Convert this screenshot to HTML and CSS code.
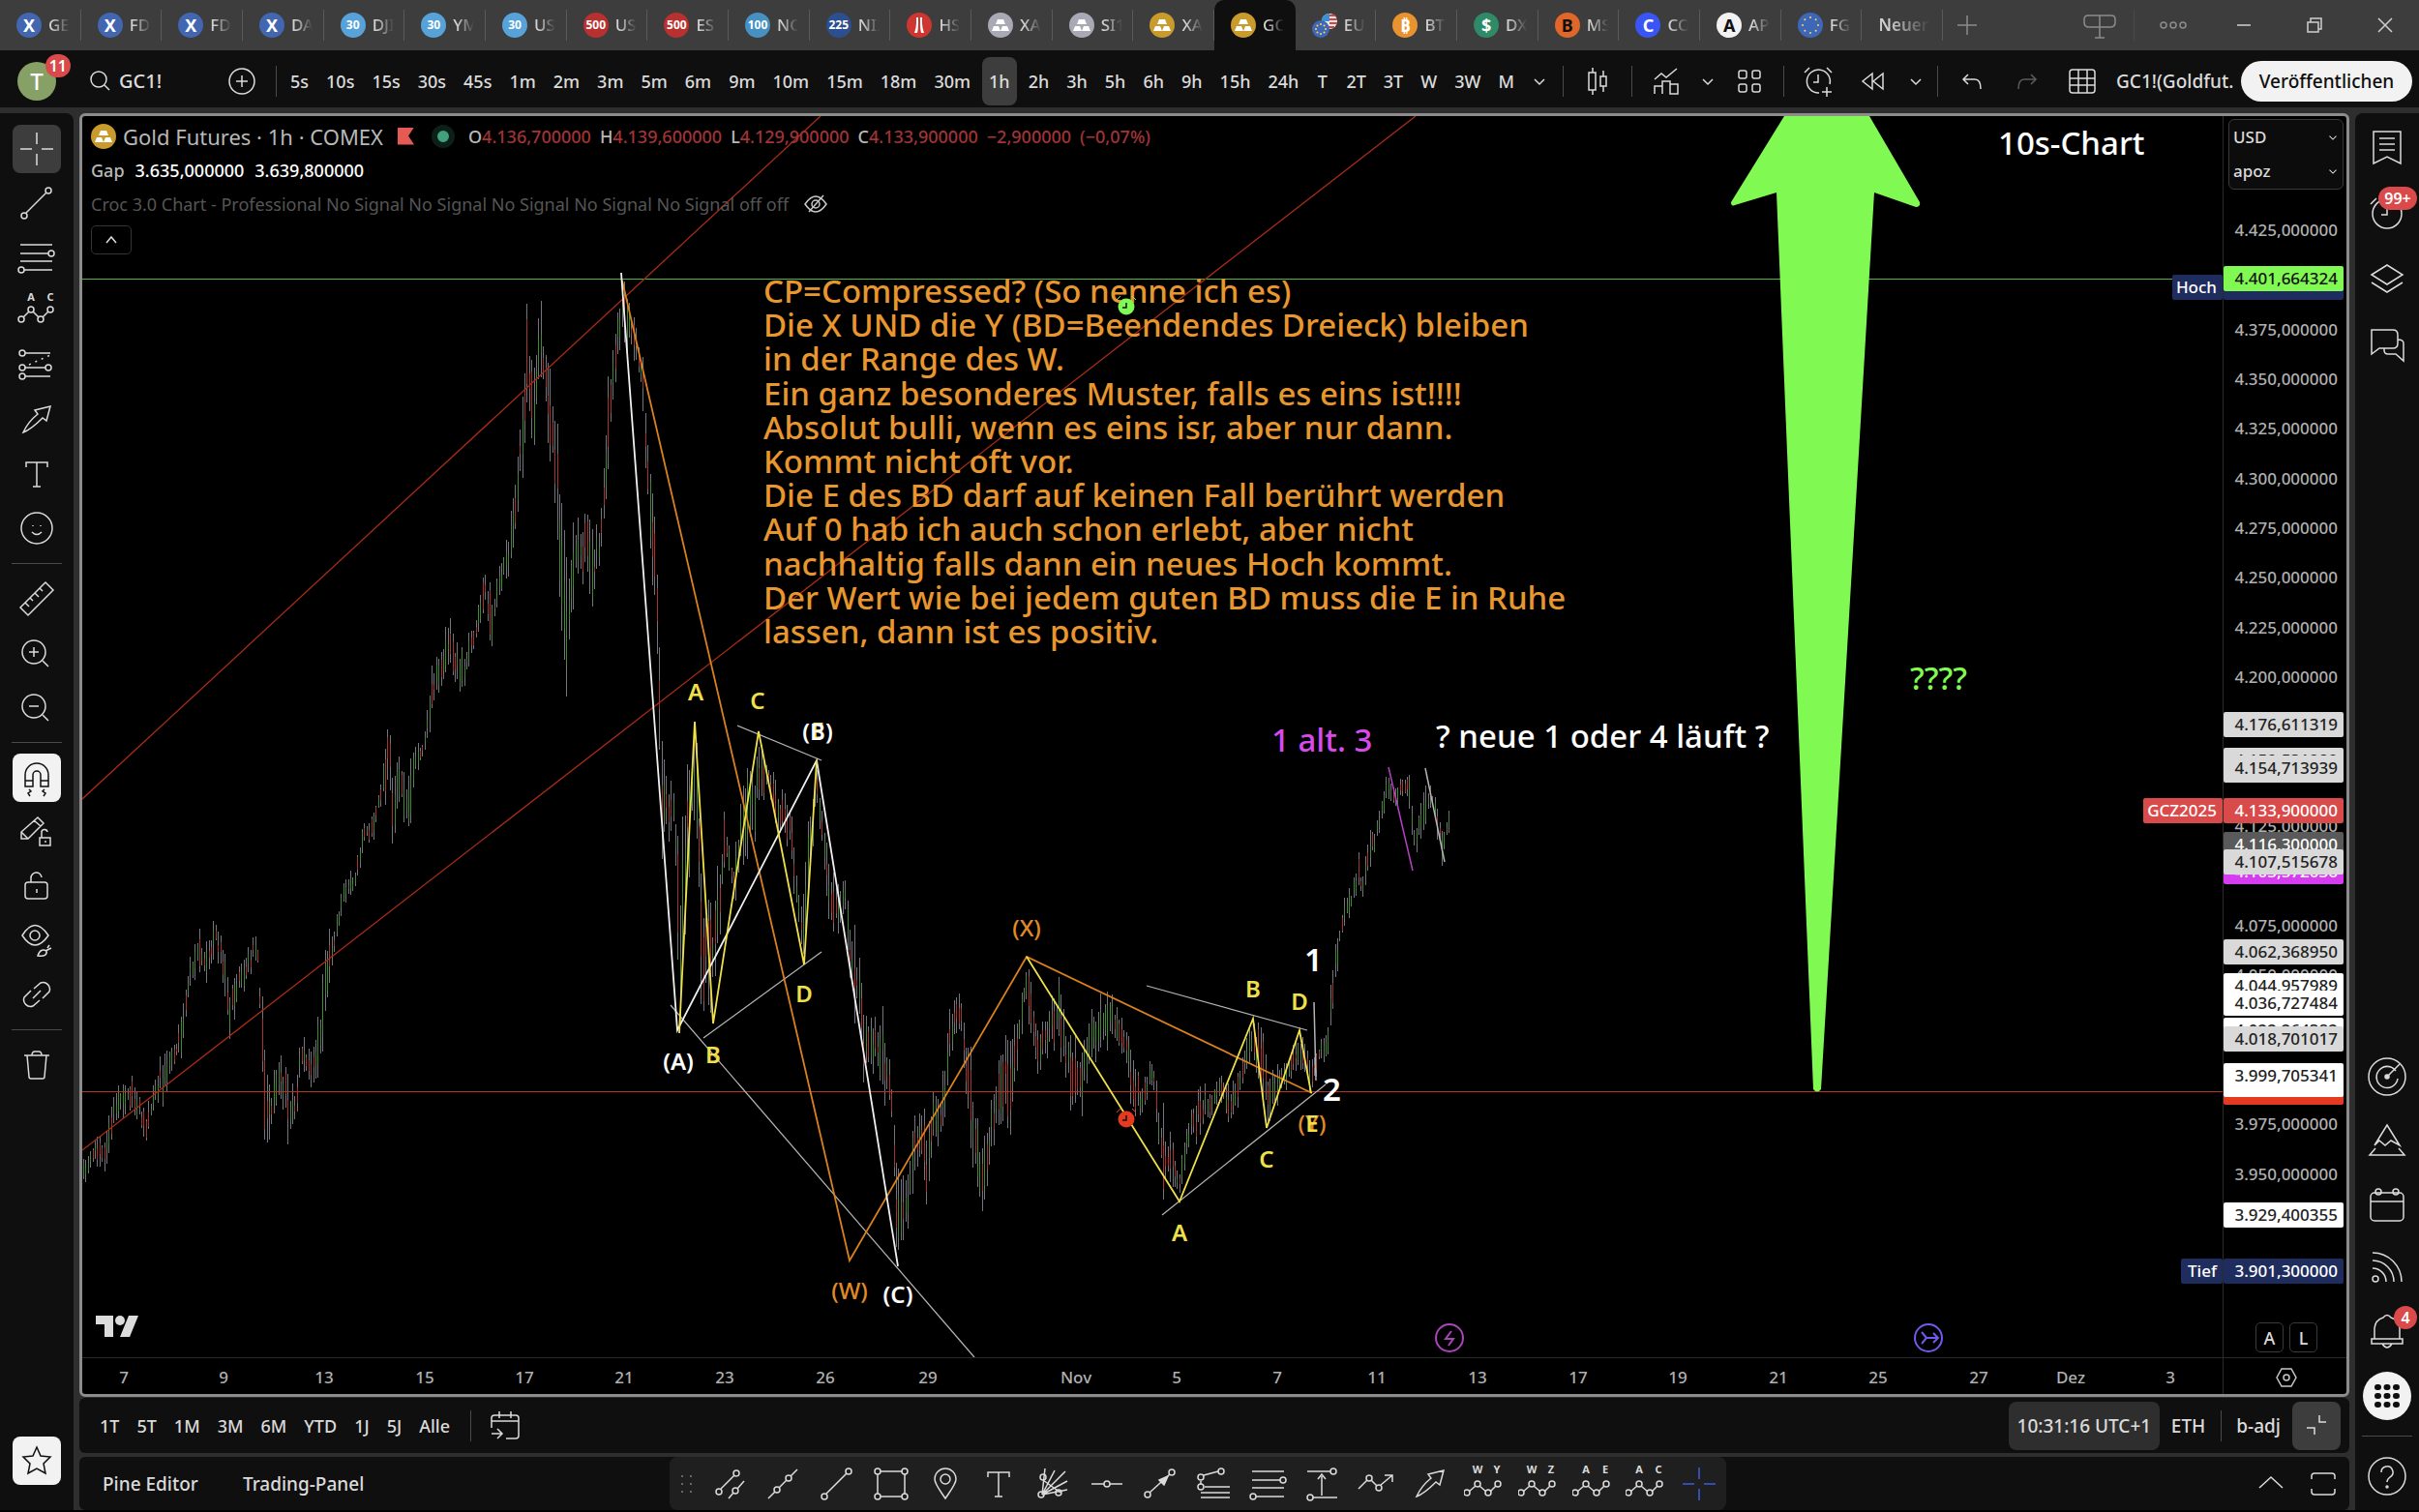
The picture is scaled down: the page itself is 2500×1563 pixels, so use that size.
FILE: index.html
```html
<!DOCTYPE html>
<html lang="de">
<head>
  <meta charset="UTF-8" />
  <meta name="viewport" content="width=device-width, initial-scale=1.0"/>
  <title>GC1! Gold Futures</title>
  <link rel="stylesheet" href="styles.css">
</head>
<body>

  <!-- Icon shapes, origin in the middle -->
  <svg class="defs" width="0" height="0" aria-hidden="true">
    <symbol id="i-cross" viewBox="-20 -20 40 40"><path d="M0-17V-5M0 5V17M-17 0H-5M5 0H17"/></symbol>
    <symbol id="i-line" viewBox="-20 -20 40 40"><path d="M-11 10L10-11"/><circle cx="-13" cy="13" r="3"/><circle cx="12" cy="-13" r="3"/></symbol>
    <symbol id="i-fib" viewBox="-20 -20 40 40"><path d="M-17-13H16M-17-4H12M-17 4H16M-13 13H16"/><circle cx="15" cy="-4" r="3"/><circle cx="-16" cy="13" r="3"/></symbol>
    <symbol id="i-abc" viewBox="-20 -20 40 40"><path d="M-14 6L-8 0M-4 0L2 6M6 6L12 0"/><circle cx="-16" cy="8" r="3"/><circle cx="-6" cy="-2" r="3"/><circle cx="4" cy="8" r="3"/><circle cx="14" cy="-2" r="3"/><text x="-6" y="-11">A</text><text x="14" y="-11">C</text></symbol>
    <symbol id="i-long" viewBox="-20 -20 40 40"><path d="M-12-13H14M-12 2H9M-12 11H14"/><path d="M-8-1L14-11" stroke-dasharray="2 5"/><circle cx="-15" cy="-13" r="3"/><circle cx="-15" cy="2" r="3"/><circle cx="12" cy="2" r="3"/><circle cx="-15" cy="11" r="3"/></symbol>
    <symbol id="i-arrow" viewBox="-20 -20 40 40"><path d="M-14 13C-10 4-4-2 1-6L-2-10L14-14L10 1L6-2C0 4-6 10-14 13Z"/></symbol>
    <symbol id="i-text" viewBox="-20 -20 40 40"><path d="M-11-7V-12H11V-7M0-12V13M-4 13H4"/></symbol>
    <symbol id="i-smile" viewBox="-20 -20 40 40"><circle r="16"/><path d="M-5 4Q0 9 5 4M-4-3v1M4-3v1"/></symbol>
    <symbol id="i-ruler" viewBox="-20 -20 40 40"><path d="M-17 9L9-17L17-9L-9 17ZM-12 4l4 4M-7-1l3 3M-2-6l4 4M3-11l3 3"/></symbol>
    <symbol id="i-zin" viewBox="-20 -20 40 40"><circle cx="-3" cy="-1" r="12"/><path d="M6 8l6 6M-8-1H2M-3-6V4"/></symbol>
    <symbol id="i-zout" viewBox="-20 -20 40 40"><circle cx="-3" cy="-1" r="12"/><path d="M6 8l6 6M-8-1H2"/></symbol>
    <symbol id="i-magnet" viewBox="-20 -20 40 40"><path d="M-12 9V-3A12 12 0 0 1 12-3V9H4V-3A4 4 0 0 0-4-3V9ZM-12 3H-4M4 3H12M-8 12l2 2-3 2 2 3M8 12l-2 2 3 2-2 3"/></symbol>
    <symbol id="i-pencil" viewBox="-20 -20 40 40"><path d="M-16 7V0L1-15L7-9L-9 7ZM-16 0L-9 7M-3-12L4-6M3 6H14V14H3ZM5 6V1A3 3 0 0 1 11 0M9 9v2"/></symbol>
    <symbol id="i-lock" viewBox="-20 -20 40 40"><rect x="-12" y="-4" width="23" height="17" rx="3"/><path d="M-6-4V-8A5 5 0 0 1 5-9M0 3v4"/></symbol>
    <symbol id="i-eye" viewBox="-20 -20 40 40"><path d="M-15-5Q-2-26 12-5Q-2 15-15-5ZM1 16C3 10 6 9 10 11C11 15 8 17 1 16ZM9 11L15 8M11 8l2-3"/><circle cx="-2" cy="-5" r="5"/></symbol>
    <symbol id="i-link" viewBox="-20 -20 40 40"><path d="M-4 4L4-4M-3-6L4-12A7 7 0 0 1 13-3L6 4M3 6L-4 12A7 7 0 0 1-13 3L-6-4"/></symbol>
    <symbol id="i-trash" viewBox="-20 -20 40 40"><path d="M-13-10H13M-10-10L-8 12Q-8 14-6 14H6Q8 14 8 12L10-10M-5-10Q-5-14-2-14H2Q5-14 5-10"/></symbol>
    <symbol id="i-star" viewBox="-20 -20 40 40"><path d="M0-14L4-5L14-4L7 3L9 13L0 8L-9 13L-7 3L-14-4L-4-5Z"/></symbol>

    <symbol id="i-list" viewBox="-20 -20 40 40"><path d="M-14-16H14V17L0 10L-14 17ZM-8-9H8M-8-3H8M-8 3H8"/></symbol>
    <symbol id="i-alarm" viewBox="-20 -20 40 40"><circle cy="1" r="15"/><path d="M0-7V2H-6M-17-9L-11-15"/></symbol>
    <symbol id="i-layers" viewBox="-20 -20 40 40"><path d="M-16-4L0-14L16-4L0 6ZM-16 4L0 14L16 4"/></symbol>
    <symbol id="i-chat" viewBox="-20 -20 40 40"><path d="M-16-15H6Q11-15 11-10V-1Q11 4 6 4H-8L-16 10ZM-3 4V6Q-3 10 1 10H9L17 17V-1Q17-5 11-5"/></symbol>
    <symbol id="i-radar" viewBox="-20 -20 40 40"><circle r="19"/><path d="M9-6A11 11 0 1 0 11 2M4-10A11 11 0 0 0 -4-10M0 0L13-13"/><circle r="2" fill="currentColor"/></symbol>
    <symbol id="i-mount" viewBox="-20 -20 40 40"><path d="M-13 5L0-16L13 5L4 0L-2 5L-8 0ZM-12 8L-18 15H18L12 8"/></symbol>
    <symbol id="i-cal" viewBox="-20 -20 40 40"><rect x="-17" y="-12" width="34" height="29" rx="4"/><path d="M-17-3H17"/><circle cx="-9" cy="-13" r="3"/><circle cx="9" cy="-13" r="3"/></symbol>
    <symbol id="i-rss" viewBox="-20 -20 40 40"><circle cx="-12" cy="11" r="3"/><path d="M-15 0A14 14 0 0 1-1 14M-15-8A22 22 0 0 1 7 14M-15-16A30 30 0 0 1 15 14"/></symbol>
    <symbol id="i-bell" viewBox="-20 -20 40 40"><path d="M-13 7V-4A13 13 0 0 1-4-15Q0-20 4-15A13 13 0 0 1 13-4V7ZM-16 7H16V12H-16ZM-5 12Q0 20 5 12"/></symbol>
    <symbol id="i-apps" viewBox="-20 -20 40 40"><path d="M-10-9h1M-.5-9h1M9-9h1M-10 0h1M-.5 0h1M9 0h1M-10 9h1M-.5 9h1M9 9h1" stroke-width="6" stroke-linecap="round"/></symbol>
    <symbol id="i-help" viewBox="-20 -20 40 40"><circle r="19"/><path d="M-6-4A6 6 0 1 1 3 1Q0 3 0 6"/><circle cy="11" r="1"/></symbol>

    <symbol id="i-search" viewBox="-20 -20 40 40"><circle cx="-1" cy="-2" r="8"/><path d="M5 4L10 9"/></symbol>
    <symbol id="i-plus" viewBox="-20 -20 40 40"><circle r="13"/><path d="M-6 0H6M0-6V6"/></symbol>
    <symbol id="i-down" viewBox="-20 -20 40 40"><path d="M-5-2L0 3L5-2"/></symbol>
    <symbol id="i-candle" viewBox="-20 -20 40 40"><path d="M-9-9H-2V9H-9ZM3-5H9V5H3ZM-5-14V-9M-5 9V14M6-11V-5M6 5V11"/></symbol>
    <symbol id="i-ind" viewBox="-20 -20 40 40"><path d="M-12 13V5H-4V13M-4 13V0H4V13M4 13V3H12V13ZM-12-2L-5-8L0-4L11-13"/></symbol>
    <symbol id="i-grid" viewBox="-20 -20 40 40"><rect x="-11" y="-11" width="8" height="8" rx="2"/><rect x="3" y="-11" width="8" height="8" rx="2"/><rect x="-11" y="3" width="8" height="8" rx="2"/><rect x="3" y="3" width="8" height="8" rx="2"/></symbol>
    <symbol id="i-clock" viewBox="-20 -20 40 40"><path d="M1 12A12 12 0 1 1 12 3M0-7V1H-5M-14-9L-9-14M9-14L14-9M9 6V16M4 11H14"/></symbol>
    <symbol id="i-rew" viewBox="-20 -20 40 40"><path d="M-1-8V8L-11 0ZM10-8V8L0 0Z"/></symbol>
    <symbol id="i-undo" viewBox="-20 -20 40 40"><path d="M-4-7L-9-2L-4 3M-9-2H3Q9-2 9 8"/></symbol>
    <symbol id="i-redo" viewBox="-20 -20 40 40"><path d="M4-7L9-2L4 3M9-2H-3Q-9-2-9 8"/></symbol>
    <symbol id="i-table" viewBox="-20 -20 40 40"><rect x="-13" y="-12" width="26" height="24" rx="3"/><path d="M-13-3H13M-13 4H13M-4-12V12M5-12V12"/></symbol>
    <symbol id="i-hide" viewBox="-20 -20 40 40"><path d="M-11 0Q0-16 11 0Q0 16-11 0ZM-7 8L8-9"/><circle r="4"/></symbol>
    <symbol id="i-up" viewBox="-20 -20 40 40"><path d="M-5 3L0-3L5 3"/></symbol>

    <symbol id="i-goto" viewBox="-20 -20 40 40"><path d="M-14 2V-8Q-14-11-11-11H11Q14-11 14-8V10Q14 13 11 13H1M-14-5H14M-6-15V-8M6-15V-8M-14 8H-3M-8 3L-3 8L-8 13"/></symbol>
    <symbol id="i-shrink" viewBox="-20 -20 40 40"><path d="M-10 2H-2V9M3-11V-4H10"/></symbol>
    <symbol id="i-fold" viewBox="-20 -20 40 40"><path d="M-12 4L0-7L12 4"/></symbol>
    <symbol id="i-full" viewBox="-20 -20 40 40"><path d="M-12-5V-8Q-12-11-9-11H9Q12-11 12-8V-5M-12 5V8Q-12 11-9 11H9Q12 11 12 8V5"/></symbol>
    <symbol id="i-dots" viewBox="-20 -20 40 40"><path d="M-5-8h2M-5 0h2M-5 8h2M4-8h2M4 0h2M4 8h2" stroke-width="2"/></symbol>
    <symbol id="i-chan" viewBox="-20 -20 40 40"><path d="M-9 5L5-9M-1 15L4 9M8 5L15-3"/><circle cx="-11" cy="8" r="3"/><circle cx="7" cy="-11" r="3"/><circle cx="6" cy="7" r="3"/></symbol>
    <symbol id="i-ext" viewBox="-20 -20 40 40"><path d="M-15 15L-8 8M-4 4L4-4M8-8L15-15"/><circle cx="-6" cy="6" r="3"/><circle cx="6" cy="-6" r="3"/></symbol>
    <symbol id="i-rect" viewBox="-20 -20 40 40"><path d="M-11-13H11M-11 13H11M-14-10V10M14-10V10"/><circle cx="-14" cy="-13" r="3"/><circle cx="14" cy="-13" r="3"/><circle cx="-14" cy="13" r="3"/><circle cx="14" cy="13" r="3"/></symbol>
    <symbol id="i-pin" viewBox="-20 -20 40 40"><path d="M0 15C-6 6-11 0-11-5A11 11 0 0 1 11-5C11 0 6 6 0 15Z"/><circle cy="-5" r="5"/></symbol>
    <symbol id="i-fan" viewBox="-20 -20 40 40"><path d="M-11 11L-8-16M-11 11L2-14M-11 11L13-13M-11 11L15-3M-11 11L15 6M-10-4L8 9"/><circle cx="-12" cy="11" r="3"/><circle cx="-10" cy="-7" r="3"/><circle cx="6" cy="9" r="3"/></symbol>
    <symbol id="i-hline" viewBox="-20 -20 40 40"><path d="M-16 0H-3M3 0H16"/><circle r="3"/></symbol>
    <symbol id="i-ray" viewBox="-20 -20 40 40"><path d="M-11 9L10-10"/><path d="M-1-4L8-8L4 1Z" fill="currentColor"/><circle cx="-13" cy="11" r="3"/><circle cx="12" cy="-12" r="3"/></symbol>
    <symbol id="i-trend" viewBox="-20 -20 40 40"><path d="M-11-9L4-13M-14-3V0M-10 3H16M-14 9H16M-14 14H16"/><circle cx="-14" cy="-7" r="3"/><circle cx="7" cy="-13" r="3"/><circle cx="-14" cy="3" r="3"/></symbol>
    <symbol id="i-meas" viewBox="-20 -20 40 40"><path d="M-15-13H9M-9 14H16M0-8V12M-4-5L0-10L4-5"/><circle cx="12" cy="-13" r="3"/><circle cx="-12" cy="14" r="3"/></symbol>
    <symbol id="i-zig" viewBox="-20 -20 40 40"><path d="M-18 5L-9-4M-5-4L1 2M5 1L17-9M9-9H17V-2"/><circle cx="-7" cy="-6" r="3"/><circle cx="3" cy="4" r="3"/></symbol>
    <symbol id="i-wave" viewBox="-20 -20 40 40"><path d="M-15 5L-8-1M-4-1L3 5M7 5L13-1"/><circle cx="-17" cy="6" r="3"/><circle cx="-6" cy="-3" r="3"/><circle cx="5" cy="6" r="3"/><circle cx="15" cy="-3" r="3"/></symbol>

    <symbol id="i-ingots" viewBox="-13 -13 26 26"><path d="M-3-6H3L5-1H-5ZM-7 1H-2L0 6H-9ZM2 1H7L9 6H0Z" fill="#fff" stroke="none"/></symbol>
    <symbol id="i-sail" viewBox="-13 -13 26 26"><path d="M-3-8H-1V-1Q-1 4-2 8H-5Q-3 2-3-2ZM1-8H3V-2Q3 2 5 8H2Q1 4 1-1Z" fill="#fff" stroke="none"/></symbol>
  </svg>

  <header class="tabs">
    <nav class="tab-list" id="tabList" aria-label="Tabs"></nav>
    <div class="win">
      <button aria-label="Neuer Tab"><svg class="ic"><path transform="translate(20 20)" d="M-10 0H10M0-10V10"/></svg></button>
      <span class="grow"></span>
      <button aria-label="Fenster"><svg class="ic"><path transform="translate(20 20)" d="M-16-6V-3Q-16 2-11 2H11Q16 2 16-3V-6Q16-10 12-10H-12Q-16-10-16-6ZM0-10V13M-5 13H5"/></svg></button>
      <i class="sep"></i>
      <button aria-label="Menü"><svg class="ic"><g transform="translate(20 20)"><circle cx="-10" r="3"/><circle r="3"/><circle cx="10" r="3"/></g></svg></button>
      <button class="bright" aria-label="Minimieren"><svg class="ic"><path transform="translate(20 20)" d="M-7 0H7"/></svg></button>
      <button class="bright" aria-label="Verkleinern"><svg class="ic"><path transform="translate(20 20)" d="M-7-3H4V7H-7ZM-4-3V-7H7V4H4"/></svg></button>
      <button class="bright" aria-label="Schließen"><svg class="ic"><path transform="translate(20 20)" d="M-7-7L7 7M7-7L-7 7"/></svg></button>
    </div>
  </header>

  <div class="toolbar">
    <button class="avatar" aria-label="Profil">T<span class="badge">11</span></button>
    <button class="symbol"><svg class="ic"><use href="#i-search"/></svg>GC1!</button>
    <button class="add" aria-label="Vergleichen"><svg class="ic"><use href="#i-plus"/></svg></button>
    <i class="sep"></i>
    <div class="intervals" id="intervals"></div>
    <div class="tools">
      <i class="sep"></i>
      <button class="w-l" aria-label="Kerzen"><svg class="ic"><use href="#i-candle"/></svg></button>
      <i class="sep"></i>
      <button class="w-l" aria-label="Indikatoren"><svg class="ic"><use href="#i-ind"/></svg></button>
      <button class="w-s" aria-label="Mehr"><svg class="ic"><use href="#i-down"/></svg></button>
      <button class="w-l" aria-label="Vorlagen"><svg class="ic"><use href="#i-grid"/></svg></button>
      <i class="sep"></i>
      <button class="w-l" aria-label="Alarm"><svg class="ic"><use href="#i-clock"/></svg></button>
      <button class="w-m" aria-label="Replay"><svg class="ic"><use href="#i-rew"/></svg></button>
      <button class="w-m" aria-label="Mehr"><svg class="ic"><use href="#i-down"/></svg></button>
      <i class="sep"></i>
      <button class="w-l" aria-label="Rückgängig"><svg class="ic"><use href="#i-undo"/></svg></button>
      <button class="w-m dim" aria-label="Wiederholen"><svg class="ic"><use href="#i-redo"/></svg></button>
      <button class="w-l" aria-label="Layout"><svg class="ic"><use href="#i-table"/></svg></button>
      <button class="layout-name">GC1!(Goldfut.</button>
      <button class="publish">Veröffentlichen</button>
    </div>
  </div>

  <main class="main">
    <aside class="left">
      <button class="on" aria-label="Fadenkreuz"><svg class="ic"><use href="#i-cross"/></svg></button>
      <button aria-label="Trendlinie"><svg class="ic"><use href="#i-line"/></svg></button>
      <button aria-label="Fibonacci"><svg class="ic"><use href="#i-fib"/></svg></button>
      <button aria-label="Muster"><svg class="ic"><use href="#i-abc"/></svg></button>
      <button aria-label="Prognose"><svg class="ic"><use href="#i-long"/></svg></button>
      <button aria-label="Pfeil"><svg class="ic"><use href="#i-arrow"/></svg></button>
      <button aria-label="Text"><svg class="ic"><use href="#i-text"/></svg></button>
      <button aria-label="Symbole"><svg class="ic"><use href="#i-smile"/></svg></button>
      <hr>
      <button aria-label="Messen"><svg class="ic"><use href="#i-ruler"/></svg></button>
      <button aria-label="Vergrößern"><svg class="ic"><use href="#i-zin"/></svg></button>
      <button aria-label="Verkleinern"><svg class="ic"><use href="#i-zout"/></svg></button>
      <hr>
      <button class="white" aria-label="Magnet"><svg class="ic"><use href="#i-magnet"/></svg></button>
      <button aria-label="Zeichenmodus"><svg class="ic"><use href="#i-pencil"/></svg></button>
      <button aria-label="Sperren"><svg class="ic"><use href="#i-lock"/></svg></button>
      <button aria-label="Ausblenden"><svg class="ic"><use href="#i-eye"/></svg></button>
      <button aria-label="Verknüpfen"><svg class="ic"><use href="#i-link"/></svg></button>
      <hr>
      <button aria-label="Löschen"><svg class="ic"><use href="#i-trash"/></svg></button>
      <span class="grow"></span>
      <button class="white" aria-label="Favoriten"><svg class="ic"><use href="#i-star"/></svg></button>
    </aside>

    <section class="center">
      <div class="chart">
        <svg class="plot" id="plot" viewBox="85 120 2340 1321" preserveAspectRatio="xMinYMin meet"></svg>

        <div class="legend">
          <div class="row title">
            <span class="coin gold"><svg><use href="#i-ingots"/></svg></span>
            <span class="name">Gold Futures · 1h · COMEX</span>
            <i class="flag"></i><i class="live"></i>
            <span class="ohlc">O<b>4.136,700000</b></span>
            <span class="ohlc">H<b>4.139,600000</b></span>
            <span class="ohlc">L<b>4.129,900000</b></span>
            <span class="ohlc">C<b>4.133,900000</b></span>
            <span class="ohlc"><b>−2,900000</b></span>
            <span class="ohlc"><b>(−0,07%)</b></span>
          </div>
          <div class="row gap"><span>Gap</span><b>3.635,000000</b><b>3.639,800000</b></div>
          <div class="row croc">Croc 3.0 Chart - Professional No Signal No Signal No Signal No Signal No Signal off off
            <svg class="ic"><use href="#i-hide"/></svg></div>
          <button class="collapse" aria-label="Einklappen"><svg class="ic"><use href="#i-up"/></svg></button>
        </div>

        <div class="units">
          <label><select aria-label="Währung"><option>USD</option></select><svg class="ic"><use href="#i-down"/></svg></label>
          <label><select aria-label="Einheit"><option>apoz</option></select><svg class="ic"><use href="#i-down"/></svg></label>
        </div>
        <div class="scale-btns"><button>A</button><button>L</button></div>
      </div>

      <div class="ranges">
        <button>1T</button><button>5T</button><button>1M</button><button>3M</button><button>6M</button><button>YTD</button><button>1J</button><button>5J</button><button>Alle</button>
        <i class="sep"></i>
        <button class="w-l" aria-label="Gehe zu"><svg class="ic"><use href="#i-goto"/></svg></button>
        <span class="grow"></span>
        <button class="clock">10:31:16 UTC+1</button>
        <button class="eth">ETH</button>
        <i class="sep"></i>
        <button class="adj">b-adj</button>
        <button class="on" aria-label="Minimieren"><svg class="ic"><use href="#i-shrink"/></svg></button>
      </div>

      <div class="bottom">
        <div class="panels"><button>Pine Editor</button><button>Trading-Panel</button></div>
        <div class="favs" id="favs"></div>
        <span class="grow"></span>
        <button class="w-p" aria-label="Öffnen"><svg class="ic"><use href="#i-fold"/></svg></button>
        <button class="w-p" aria-label="Vollbild"><svg class="ic"><use href="#i-full"/></svg></button>
      </div>
    </section>

    <aside class="right">
      <div class="upper">
        <button aria-label="Watchlist"><svg class="ic"><use href="#i-list"/></svg></button>
        <button aria-label="Alarme"><svg class="ic"><use href="#i-alarm"/></svg><span class="badge wide">99+</span></button>
        <button aria-label="Objektbaum"><svg class="ic"><use href="#i-layers"/></svg></button>
        <button aria-label="Chats"><svg class="ic"><use href="#i-chat"/></svg></button>
      </div>
      <button aria-label="Screener"><svg class="ic"><use href="#i-radar"/></svg></button>
      <button aria-label="Pine"><svg class="ic"><use href="#i-mount"/></svg></button>
      <button aria-label="Kalender"><svg class="ic"><use href="#i-cal"/></svg></button>
      <button aria-label="News"><svg class="ic"><use href="#i-rss"/></svg></button>
      <button aria-label="Mitteilungen"><svg class="ic"><use href="#i-bell"/></svg><span class="badge">4</span></button>
      <button class="apps" aria-label="Apps"><span><svg class="ic"><use href="#i-apps"/></svg></span></button>
      <hr>
      <button aria-label="Hilfe"><svg class="ic"><use href="#i-help"/></svg></button>
    </aside>
  </main>

  <script src="chart.js"></script>
</body>
</html>
```

FILE: styles.css
```css
* {
  box-sizing: border-box;
}

body {
  margin: 0;
  height: 100vh;
  display: flex;
  flex-direction: column;
  background: #2e2e2e;
  border-bottom: 2px solid #000;
  color: #dbdbdb;
  font-family: "Noto Sans", "Open Sans", sans-serif;
  font-size: 18px;
  font-weight: 500;
  line-height: 24px;
  overflow: hidden;
}

button {
  display: flex;
  align-items: center;
  justify-content: center;
  flex: none;
  padding: 0;
  border: none;
  background: none;
  color: inherit;
  font: inherit;
  white-space: nowrap;
  cursor: pointer;
}

.defs {
  position: absolute;
}

.ic {
  width: 40px;
  height: 40px;
  flex: none;
  fill: none;
  stroke: currentColor;
  stroke-width: 1.5;
}

.ic text,
symbol text {
  font-size: 11px;
  font-weight: 700;
  text-anchor: middle;
  fill: currentColor;
  stroke: none;
}

.grow {
  flex: 1;
}

.sep {
  flex: none;
  width: 1px;
  height: 32px;
  background: #4a4a4a;
}

.w-s { width: 16px; }
.w-m { width: 44px; }
.w-p { width: 54px; }
.w-l { width: 70px; }
.dim { color: #5c5c5c; }

.badge {
  position: absolute;
  display: flex;
  align-items: center;
  justify-content: center;
  min-width: 24px;
  height: 24px;
  padding: 0 4px;
  border-radius: 12px;
  background: #da4a4a;
  color: #fff;
  font-size: 16px;
  font-weight: 600;
}

/* Tabs */
.tabs {
  display: flex;
  flex: none;
  height: 52px;
  background: #3d3d3d;
}

.tab-list {
  display: flex;
  flex: 1;
  min-width: 0;
}

.tab {
  display: flex;
  align-items: center;
  flex: 1 1 0;
  min-width: 0;
  gap: 7px;
  padding-left: 17px;
  position: relative;
  overflow: hidden;
  color: #d0d0d0;
  font-size: 17px;
  text-decoration: none;
}

.tab::after {
  content: "";
  position: absolute;
  right: 0;
  top: 10px;
  width: 1px;
  height: 32px;
  background: #5a5a5a;
}

.tab.active {
  background: #0f0f0f;
  border-radius: 10px 10px 0 0;
}

.tab.active::after {
  display: none;
}

.tab .short {
  width: 22px;
  overflow: hidden;
  white-space: nowrap;
  -webkit-mask-image: linear-gradient(90deg, #000 20%, transparent);
  mask-image: linear-gradient(90deg, #000 20%, transparent);
}

.tab .long {
  width: 54px;
  font-weight: 600;
}

.coin {
  display: flex;
  align-items: center;
  justify-content: center;
  flex: none;
  width: 26px;
  height: 26px;
  border-radius: 50%;
  color: #fff;
  font-size: 12px;
  font-weight: 700;
}

.coin svg {
  width: 26px;
  height: 26px;
}

.coin.big { font-size: 18px; }
.gold { background: #c99a2c; }
.silver { background: #a9a9b5; }
.red { background: #cf3630; }

.win {
  display: flex;
  align-items: center;
  width: 492px;
  padding-left: 5px;
  color: #8c8c8c;
}

.win .sep {
  margin: 0 0 0 15px;
}

.win button + button {
  margin-left: 33px;
}

.win .sep + button {
  margin-left: 20px;
}

.win button:last-child {
  margin-right: 15px;
}

.bright {
  color: #d0d0d0;
}

/* Toolbar */
.toolbar {
  display: flex;
  align-items: center;
  flex: none;
  height: 59px;
  margin-bottom: 6px;
  padding-top: 4px;
  background: #0f0f0f;
}

.avatar {
  position: relative;
  width: 40px;
  height: 40px;
  margin: 0 25px 0 18px;
  border-radius: 50%;
  background: #86a065;
  color: #fff;
  font-size: 24px;
}

.avatar .badge {
  top: -8px;
  right: -15px;
  min-width: 26px;
}

.symbol {
  width: 147px;
  justify-content: flex-start;
  font-size: 20px;
}

.add {
  width: 40px;
}

.add + .sep {
  margin-left: 15px;
}

.intervals {
  display: flex;
  align-items: center;
  padding-left: 5px;
}

.intervals button {
  height: 50px;
  padding: 0 9px;
}

.intervals .on {
  padding: 0 7px;
  margin: 0 3px;
  border-radius: 8px;
  background: #3d3d3d;
}

.intervals .on ~ button {
  min-width: 31px;
}

.intervals .more {
  width: 34px;
}

.tools {
  display: flex;
  align-items: center;
  margin-left: auto;
  padding-right: 7px;
}

.layout-name {
  justify-content: flex-start;
  width: 124px;
  font-size: 19px;
}

.publish {
  width: 177px;
  height: 42px;
  margin-left: 5px;
  border-radius: 21px;
  background: #f2f2f2;
  color: #0f0f0f;
  font-size: 19px;
}

/* Page body */
.main {
  display: flex;
  flex: 1;
  min-height: 0;
  gap: 6px;
}

.left,
.right {
  display: flex;
  flex-direction: column;
  align-items: center;
  flex: none;
  background: #0f0f0f;
}

.left {
  width: 76px;
  gap: 6px;
  padding: 12px 0 26px;
  border-radius: 0 8px 0 0;
}

.left button {
  width: 50px;
  height: 50px;
  border-radius: 8px;
}

.left hr,
.right hr {
  flex: none;
  width: 52px;
  height: 1px;
  margin: 5px 0;
  border: none;
  background: #4a4a4a;
}

.on {
  background: #3d3d3d;
}

.left .white {
  background: #f2f2f2;
  color: #0f0f0f;
}

.right {
  width: 66px;
  padding: 2px 0;
  border-radius: 8px 0 0 0;
}

.right button {
  position: relative;
  width: 66px;
  height: 66px;
}

.right hr {
  margin: 8px 0;
}

.upper {
  display: flex;
  flex-direction: column;
  flex: 1;
  gap: 2px;
}

.right .badge {
  top: 6px;
  right: 2px;
}

.right .wide {
  width: 40px;
}

.apps span {
  display: flex;
  align-items: center;
  justify-content: center;
  width: 50px;
  height: 50px;
  border-radius: 50%;
  background: #f2f2f2;
  color: #0f0f0f;
}

/* Chart */
.center {
  display: flex;
  flex-direction: column;
  flex: 1;
  min-width: 0;
}

.chart {
  position: relative;
  flex: 1;
  min-height: 0;
  margin-bottom: 1px;
  border: 3px solid #8c8c8c;
  border-radius: 6px;
  background: #000;
}

.plot {
  display: block;
  width: 100%;
  height: 100%;
}

.legend {
  position: absolute;
  top: 3px;
  left: 9px;
}

.row {
  display: flex;
  align-items: center;
  height: 35px;
  color: #b8b8b8;
}

.title .coin {
  margin-right: 7px;
}

.title .name {
  margin-right: 15px;
  font-size: 22px;
  font-weight: 400;
}

.flag {
  width: 17px;
  height: 18px;
  margin-right: 18px;
  background: #e55a52;
  clip-path: polygon(0 0, 100% 0, 65% 50%, 100% 100%, 0 100%);
}

.live {
  width: 24px;
  height: 24px;
  margin-right: 14px;
  border: 6px solid #0c1f19;
  border-radius: 50%;
  background: #41a17c;
}

.ohlc {
  margin-right: 9px;
}

.ohlc b {
  color: #a03436;
  font-weight: 500;
}

.gap b {
  margin-left: 11px;
  color: #fff;
  font-weight: 500;
}

.croc {
  color: #555;
  font-weight: 400;
}

.croc .ic {
  margin-left: 8px;
  color: #c8c8c8;
}

.collapse {
  width: 42px;
  height: 30px;
  margin-top: 5px;
  border: 1px solid #333;
  border-radius: 5px;
}

.units {
  position: absolute;
  top: 3px;
  right: 3px;
  width: 119px;
  height: 73px;
  border: 1px solid #3a3a3a;
  border-radius: 6px;
  background: #0c0c0c;
}

.units label {
  display: flex;
  align-items: center;
  height: 35px;
}

.units select {
  flex: 1;
  width: 80px;
  padding: 0 0 0 4px;
  border: none;
  background: none;
  color: #dbdbdb;
  font: inherit;
  font-size: 17px;
  appearance: none;
}

.units .ic {
  width: 28px;
  height: 28px;
  margin-right: -4px;
}

.scale-btns {
  position: absolute;
  right: 30px;
  bottom: 43px;
  display: flex;
  gap: 6px;
}

.scale-btns button {
  width: 29px;
  height: 31px;
  border: 1px solid #3a3a3a;
  border-radius: 5px;
  font-size: 18px;
}

.plot text {
  font-size: 17px;
  fill: #b0b0b0;
}

.plot .axis { stroke: #2a2a2a; }
.plot .time { text-anchor: middle; }
.plot .price { text-anchor: end; }
.plot .wave { font-size: 24px; font-weight: 600; text-anchor: middle; }
.plot .thin { font-weight: 500; }
.plot .count { font-size: 33px; font-weight: 600; }
.plot .note { font-size: 33px; }
.plot .essay { font-size: 33px; fill: #e8962e; }
.plot polyline, .plot .wick, .plot .body { fill: none; }

/* Range bar and bottom bar */
.ranges,
.bottom {
  display: flex;
  align-items: center;
  flex: none;
  background: #0f0f0f;
  border-radius: 6px;
}

.ranges {
  height: 57px;
  padding: 0 9px 0 12px;
}

.ranges button {
  height: 50px;
  padding: 0 9px;
  border-radius: 8px;
}

.ranges .sep {
  margin-left: 12px;
}

.ranges .clock {
  width: 156px;
  background: #2e2e2e;
  font-size: 19px;
}

.ranges .eth {
  padding: 0 4px 0 12px;
  font-size: 19px;
}

.ranges .adj {
  padding: 0 12px 0 15px;
  font-size: 19px;
}

.ranges .on {
  width: 50px;
}

.bottom {
  height: 55px;
  margin-top: 4px;
}

.panels {
  display: flex;
  gap: 46px;
  width: 26%;
  padding-left: 24px;
  font-size: 19px;
}

.favs {
  display: flex;
  width: 1092px;
  height: 55px;
  background: #1f1f1f;
  border-radius: 8px;
}

.favs button {
  flex: 1;
}

.favs button:first-child {
  flex: none;
  width: 34px;
  color: #666;
}

.favs .blue {
  color: #3d5fe0;
}
```

FILE: chart.js
```js
// ---------- tabs ----------
const tabs = [
  ['X', '#4266b0', 'GER'], ['X', '#4266b0', 'FDX'], ['X', '#4266b0', 'FDX'], ['X', '#4266b0', 'DAX'],
  ['30', '#57a3d9', 'DJI'], ['30', '#57a3d9', 'YM1'], ['30', '#57a3d9', 'US3'],
  ['500', '#b8312f', 'US5'], ['500', '#b8312f', 'ES1'],
  ['100', '#4691c1', 'NQ1'], ['225', '#2c4f8f', 'NI2'], ['sail', 'red', 'HSI'],
  ['ingots', 'silver', 'XAG'], ['ingots', 'silver', 'SI1'], ['ingots', 'gold', 'XAU'], ['ingots', 'gold', 'GC1'],
  ['euus', '', 'EUR'], ['₿', '#e8932f', 'BTC'], ['$', '#2f8a68', 'DXY'], ['B', '#e0662a', 'MST'],
  ['C', '#3a55f5', 'COI'], ['A', '#f2f2f2', 'APT'], ['eu', '#3f67b8', 'FGB'], ['', '', 'Neuer Tab']
];

function stars(cx, cy, r) {
  let s = '';
  for (let i = 0; i < 8; i++) {
    const a = i * Math.PI / 4;
    s += `<circle cx="${cx + r * Math.cos(a)}" cy="${cy + r * Math.sin(a)}" r="1" fill="#ffd84a"/>`;
  }
  return s;
}

function coin([sign, color]) {
  if (!sign) return '';
  if (sign === 'ingots' || sign === 'sail') return `<span class="coin ${color}"><svg><use href="#i-${sign}"/></svg></span>`;
  if (sign === 'eu') return `<span class="coin" style="background:${color}"><svg>${stars(13, 13, 8)}</svg></span>`;
  if (sign === 'euus') {
    return `<span class="coin"><svg><circle cx="18" cy="9" r="8" fill="#e8e8e8"/><path d="M18 3h6M18 7h8M18 11h8M17 15h6" stroke="#d04545" stroke-width="2"/><path d="M10 9a8 8 0 0 1 8-8v8z" fill="#3f8fd0"/><circle cx="9" cy="17" r="9" fill="#3f67b8"/>${stars(9, 17, 5)}</svg></span>`;
  }
  const dark = sign === 'A' || sign === 'B' ? ';color:#111' : '';
  const big = sign.length === 1 ? ' big' : '';
  return `<span class="coin${big}" style="background:${color}${dark}">${sign}</span>`;
}

document.getElementById('tabList').innerHTML = tabs.map((t, i) =>
  `<a class="tab${i === 15 ? ' active' : ''}" href="#">${coin(t)}<span class="short${t[0] ? '' : ' long'}">${t[2]}</span></a>`
).join('');

// ---------- intervals ----------
const intervals = '5s 10s 15s 30s 45s 1m 2m 3m 5m 6m 9m 10m 15m 18m 30m 1h 2h 3h 5h 6h 9h 15h 24h T 2T 3T W 3W M'.split(' ');
document.getElementById('intervals').innerHTML = intervals.map(t =>
  `<button${t === '1h' ? ' class="on"' : ''}>${t}</button>`).join('') +
  '<button class="more" aria-label="Mehr"><svg class="ic"><use href="#i-down"/></svg></button>';

// ---------- favourite drawing tools ----------
const favs = ['dots', 'chan', 'ext', 'line', 'rect', 'pin', 'text', 'fan', 'hline', 'ray', 'trend', 'fib',
  'meas', 'zig', 'arrow', 'WY', 'WZ', 'AE', 'AC', 'cross'];
document.getElementById('favs').innerHTML = favs.map(f => {
  const wave = f.length === 2;
  const inner = wave
    ? `<use href="#i-wave" y="3" width="40" height="40"/><text x="14" y="9">${f[0]}</text><text x="34" y="9">${f[1]}</text>`
    : `<use href="#i-${f}"/>`;
  return `<button aria-label="${f}"${f === 'cross' ? ' class="blue"' : ''}><svg class="ic">${inner}</svg></button>`;
}).join('');

// ---------- chart ----------
// price envelope: x, top, bottom
const env = [
  [85,1204,1229],[98,1172,1204],[108,1178,1213],[118,1127,1169],[131,1115,1146],[141,1118,1153],[150,1153,1185],
  [162,1108,1140],[167,1083,1143],[179,1083,1105],[188,1051,1089],[196,993,1019],[206,965,1000],[213,971,1022],
  [222,947,981],[229,961,1006],[236,1019,1070],[246,990,1038],[256,984,1012],[265,955,987],[269,1012,1070],
  [274,1089,1194],[281,1118,1172],[289,1092,1124],[298,1121,1185],[304,1121,1175],[311,1073,1108],[319,1083,1121],
  [325,1083,1127],[332,1025,1095],[339,955,1019],[345,958,993],[355,907,942],[366,898,923],[376,847,872],
  [385,847,872],[392,808,840],[402,726,815],[405,802,891],[414,783,821],[421,808,875],[429,764,802],[437,764,789],
  [446,694,738],[455,675,706],[464,636,681],[470,668,713],[480,668,706],[491,639,668],[501,588,630],[508,617,668],
  [516,579,617],[524,560,598],[533,477,541],[541,407,483],[544,308,400],[550,356,509],[558,314,388],[565,356,445],
  [573,407,502],[580,528,643],[585,579,706],[594,521,617],[604,534,592],[613,553,624],[621,534,566],[627,413,515],
  [635,349,394],[643,292,356],[651,317,368],[659,343,388],[665,375,439],[671,470,579],[677,528,617],[682,675,872],
  [687,796,872],[697,815,853],[702,898,1051],[710,808,930],[718,751,834],[724,866,1013],[728,930,1044],
  [736,930,1057],[743,885,981],[749,840,891],[758,898,936],[769,802,885],[779,802,872],[784,764,821],[794,783,821],
  [804,815,859],[815,821,872],[822,885,949],[829,949,993],[835,834,936],[843,789,834],[849,821,872],[857,898,962],
  [868,917,962],[874,912,948],[879,948,1037],[888,984,1064],[893,1037,1135],[900,1060,1104],[912,1046,1126],
  [921,1104,1171],[927,1216,1305],[935,1220,1283],[942,1171,1238],[951,1144,1184],[958,1162,1251],[964,1126,1176],
  [972,1135,1189],[981,1046,1118],[987,1019,1059],[994,1037,1082],[1005,1109,1207],[1011,1171,1256],
  [1020,1171,1247],[1027,1126,1176],[1036,1073,1149],[1044,1082,1162],[1053,1046,1082],[1060,992,1037],
  [1072,1055,1104],[1083,1046,1091],[1094,1015,1082],[1104,1059,1135],[1116,1082,1162],[1125,1046,1100],
  [1134,1037,1095],[1149,1028,1073],[1161,1059,1091],[1170,1091,1144],[1179,1118,1153],[1191,1091,1118],
  [1200,1140,1234],[1209,1176,1229],[1219,1207,1242],[1230,1140,1184],[1239,1122,1171],[1251,1126,1162],
  [1260,1113,1135],[1272,1126,1162],[1283,1095,1126],[1294,1055,1086],[1304,1064,1131],[1310,1118,1162],
  [1319,1104,1140],[1331,1091,1122],[1343,1068,1100],[1354,1091,1126],[1364,1077,1100],[1372,1073,1100],
  [1376,992,1064],[1382,966,1001],[1388,930,957],[1397,917,943],[1403,881,917],[1408,908,934],[1414,859,899],
  [1421,854,876],[1429,814,845],[1435,796,823],[1441,818,841],[1448,801,823],[1456,801,827],[1460,841,894],
  [1466,845,872],[1474,809,845],[1481,814,841],[1490,863,894],[1498,827,859]
];

let seed = 7;
function rnd() {
  seed = (seed * 16807) % 2147483647;
  return seed / 2147483647;
}

let out = '';
const text = (x, y, s, cls, fill) =>
  `<text x="${x}" y="${y}" class="${cls}"${fill ? ` style="fill:${fill}"` : ''}>${s}</text>`;
const line = (points, color, width = 1.5) =>
  `<polyline points="${points}" stroke="${color}" stroke-width="${width}"/>`;

// candles
let wicks = '', up = '', down = '';
let k = 0;
for (let x = 86; x < 1499; x += 2.4) {
  while (env[k + 1][0] < x) k++;
  const [x0, t0, b0] = env[k], [x1, t1, b1] = env[k + 1];
  const f = (x - x0) / (x1 - x0);
  const top = t0 + (t1 - t0) * f, bot = b0 + (b1 - b0) * f, h = bot - top;
  const a = top + h * (rnd() * 0.5 - 0.15), b = bot - h * (rnd() * 0.5 - 0.15);
  const px = Math.round(x) + 0.5;
  wicks += `M${px} ${a.toFixed(0)}V${b.toFixed(0)}`;
  const body = `M${px} ${(a + (b - a) * (0.1 + rnd() * 0.35)).toFixed(0)}V${(b - (b - a) * (0.1 + rnd() * 0.35)).toFixed(0)}`;
  const rising = t1 + b1 < t0 + b0;
  if (rnd() < 0.75 ? rising : !rising) up += body; else down += body;
}
out += `<path class="wick" stroke="#74747e" d="${wicks}"/>`;
out += `<path class="body" stroke="#3f8a31" d="${up}"/><path class="body" stroke="#a8322c" d="${down}"/>`;

// levels and channel
out += line('85,288.5 2297,288.5', '#52b83a', 1);
out += line('85,1128.5 2297,1128.5', '#b5341f', 1);
out += line('85,826 848,120', '#a82c16', 1.3);
out += line('85,1189 1463,120', '#a82c16', 1.3);

// text note
const essay = [
  'CP=Compressed? (So nenne ich es)',
  'Die X UND die Y (BD=Beendendes Dreieck) bleiben',
  'in der Range des W.',
  'Ein ganz besonderes Muster, falls es eins ist!!!!',
  'Absolut bulli, wenn es eins isr, aber nur dann.',
  'Kommt nicht oft vor.',
  'Die E des BD darf auf keinen Fall berührt werden',
  'Auf 0 hab ich auch schon erlebt, aber nicht',
  'nachhaltig falls dann ein neues Hoch kommt.',
  'Der Wert wie bei jedem guten BD muss die E in Ruhe',
  'lassen, dann ist es positiv.'
];
essay.forEach((s, i) => { out += text(789, 313 + i * 35.2, s, 'essay'); });

// helper lines
const grey = '#b4b4b4';
out += line('762,750 849,786', grey, 1.2) + line('727,1073 849,984', grey, 1.2) + line('693,1039 1007,1403', grey, 1.2);
out += line('1185,1019 1351,1065', grey, 1.2) + line('1201,1256 1370,1121', grey, 1.2);
out += line('1358,1036 1360,1117', grey) + line('1473,794 1493,891', grey) + line('1435,793 1460,900', '#b440c4');

// waves
out += line('643,290 878,1303 1061,989 1356,1130', '#d9801f', 1.8);
out += line('642,282 700,1065 844,786 928,1309', '#f0f0f0', 1.8);
out += line('702,1068 718,746 737,1058 784,756 831,997 844,786', '#efe04a', 1.8);
out += line('1061,989 1219,1242 1295,1053 1309,1166 1343,1065 1355,1130', '#efe04a', 1.8);

// labels
const Y = '#efe04a', W = '#fff', O = '#e08a28';
[
  [719, 715, 'A', Y], [783, 724, 'C', Y], [845, 755, 'E', Y], [845, 756, '(B)', W], [831, 1027, 'D', Y],
  [701, 1097, '(A)', W], [737, 1090, 'B', Y], [878, 1334, '(W)', O], [928, 1338, '(C)', W], [1061, 959, '(X)', O],
  [1295, 1022, 'B', Y], [1343, 1035, 'D', Y], [1309, 1198, 'C', Y], [1219, 1274, 'A', Y],
  [1356, 1161, '(Y)', O], [1356, 1161, 'E', Y]
].forEach(([x, y, s, c]) => { out += text(x, y + 9, s, c === O ? 'wave thin' : 'wave', c); });
out += text(1348, 1004, '1', 'count', W) + text(1367, 1138, '2', 'count', W);
out += text(1314, 777, '1 alt. 3', 'note', '#d94be8');
out += text(1484, 773, '? neue 1 oder 4 läuft ?', 'note', W);
out += text(1974, 713, '????', 'note', '#80fa52');
out += text(2065, 160, '10s-Chart', 'note', W);

// big arrow
out += '<path d="M1844 120L1789 209Q1789 214 1793 212L1836 199L1874 1126Q1878 1131 1882 1126L1937 199L1980 214Q1985 214 1984 209L1932 120Z" fill="#80fa52"/>';

// alert markers
const alertMark = (x, y, c) =>
  `<circle cx="${x}" cy="${y}" r="8.5" fill="${c}"/><path d="M${x} ${y - 4}v5h-4" fill="none" stroke="#111" stroke-width="1.5"/><path d="M${x - 10} ${y - 7}l4-4M${x + 6} ${y - 11}l4 4" fill="none" stroke="${c}" stroke-width="1"/>`;
out += alertMark(1164, 317, '#80fa52') + alertMark(1164, 1157, '#e63a20');

// events
out += '<g fill="none" stroke-width="2"><circle cx="1498" cy="1383" r="14" stroke="#a846b8"/><path d="M1500 1376l-6 8h8l-5 7" stroke="#a846b8"/>';
out += '<circle cx="1993" cy="1383" r="14" stroke="#7358ee"/><path d="M1986 1377l5 6-5 6M1991 1383h11M1998 1378l5 5-5 5" stroke="#7358ee"/></g>';

// logo
out += '<g fill="#dcdcdc"><path d="M99 1360H117V1382H108V1369H99Z"/><circle cx="124" cy="1365" r="5"/><path d="M133 1360H143L134 1382H124Z"/></g>';

// axes
out += '<path class="axis" d="M85 1403.5H2425M2297.5 120V1441"/>';
[
  [128, '7'], [231, '9'], [335, '13'], [439, '15'], [542, '17'], [645, '21'], [749, '23'], [853, '26'], [959, '29'],
  [1112, 'Nov'], [1216, '5'], [1320, '7'], [1423, '11'], [1527, '13'], [1631, '17'], [1734, '19'], [1838, '21'],
  [1941, '25'], [2045, '27'], [2140, 'Dez'], [2243, '3']
].forEach(([x, s]) => { out += text(x, 1430, s, 'time'); });
out += '<path d="M2353 1424L2358 1415H2368L2373 1424L2368 1433H2358Z" fill="none" stroke="#c8c8c8" stroke-width="1.5"/><circle cx="2363" cy="1424" r="3" fill="none" stroke="#c8c8c8" stroke-width="1.5"/>';

for (let p = 4425; p >= 3950; p -= 25) {
  if (p === 4400 || p === 4175 || p === 4150 || p === 4100 || p === 4025 || p === 4000) continue;
  const y = 238 + (4425 - p) * 2.054;
  out += text(2416, Math.round(y) + 6, `${String(p)[0]}.${String(p).slice(1)},000000`, 'price');
}

// price tags, later ones lie on top: centre y, text, background, colour, tag on the left, its x
[
  [297, '', '#1f2c5e', W, 'Hoch', 2245],
  [288, '4.401,664324', '#80fa52', '#111'],
  [749, '4.176,611319', '#d9d9d9', '#222'],
  [786, '4.159,531289', '#d9d9d9', '#222'],
  [796, '', '#d9d9d9', '#222'],
  [794, '4.154,713939', '#d9d9d9', '#222'],
  [838, '4.133,900000', '#d94a4a', W, 'GCZ2025', 2215],
  [873, '4.116,300000', '#5a5a5a', W],
  [901, '4.103,572036', '#d63cf0', W],
  [891, '4.107,515678', '#d9d9d9', '#222'],
  [984, '4.062,368950', '#d9d9d9', '#222'],
  [1019, '4.044,957989', '#fff', '#222'],
  [1037, '4.036,727484', '#fff', '#222'],
  [1065, '4.022,264382', '#fff', '#222'],
  [1074, '4.018,701017', '#d9d9d9', '#222'],
  [1129, '', '#e63a20', W],
  [1121, '', '#fff', '#222'],
  [1112, '3.999,705341', '#fff', '#222'],
  [1256, '3.929,400355', '#fff', '#222'],
  [1314, '3.901,300000', '#1f2c5e', W, 'Tief', 2254]
].forEach(([y, s, bg, fg, tag, x]) => {
  out += `<rect x="2298" y="${y - 13}" width="124" height="26" rx="2" fill="${bg}"/>`;
  if (s) out += text(2416, y + 6, s, 'price', fg);
  if (tag) out += `<rect x="${x}" y="${y - 13}" width="${2297 - x}" height="26" rx="2" fill="${bg}"/>` + text(2291, y + 6, tag, 'price', W);
});

document.getElementById('plot').innerHTML = out;
```
